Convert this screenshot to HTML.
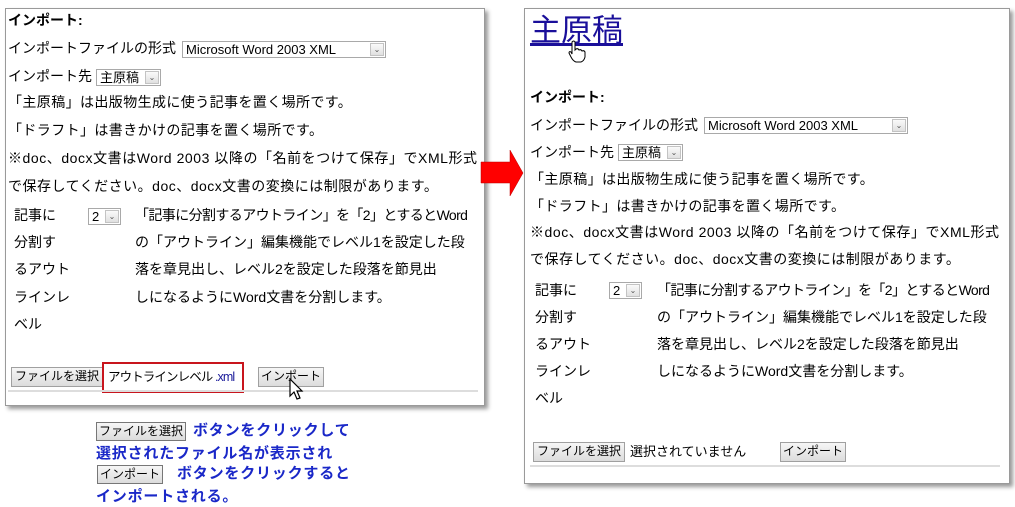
<!DOCTYPE html>
<html><head><meta charset="utf-8"><style>
body{margin:0;width:1015px;height:507px;background:#fff;position:relative;overflow:hidden;font-family:"Liberation Sans","Noto Sans CJK JP",sans-serif;color:#000}
.p{position:absolute;background:#fff;border:1px solid #9a9a9a;box-shadow:3px 3px 4px #999}
.t{position:absolute;white-space:nowrap;font-size:14px;line-height:16px}
.sel{position:absolute;border:1px solid #a9a9a9;background:#fff;font-size:13px;line-height:16px;height:17px;padding-left:3px;box-sizing:border-box;color:#000;white-space:nowrap}
.sel .a{position:absolute;right:1px;top:1px;width:14px;height:13px;border:1px solid #c3c3c3;background:linear-gradient(#fafafa,#e0e0e0);box-sizing:border-box;font-size:8px;line-height:12px;text-align:center;color:#555}
.btn{position:absolute;border:1px solid #a0a0a0;background:linear-gradient(#f6f6f6,#dcdcdc);font-size:12px;line-height:17px;height:20px;box-sizing:border-box;text-align:center;white-space:nowrap;overflow:hidden}
.hr{position:absolute;height:2px;background:#ddd}
.b{position:absolute;white-space:nowrap;font-size:15px;font-weight:bold;color:#1a28c8;line-height:16px;letter-spacing:0.8px}
</style></head><body>

<!-- left panel -->
<div class="p" style="left:5px;top:8px;width:478px;height:396px"></div>
<div class="t" style="left:8px;top:12px;font-weight:bold">インポート:</div>
<div class="t" style="left:8px;top:40px">インポートファイルの形式</div>
<div class="sel" style="left:182px;top:41px;width:204px">Microsoft Word 2003 XML<span class="a">⌄</span></div>
<div class="t" style="left:8px;top:68px">インポート先</div>
<div class="sel" style="left:96px;top:69px;width:65px">主原稿<span class="a">⌄</span></div>
<div class="t" style="left:8px;top:94px;letter-spacing:0.4px">「主原稿」は出版物生成に使う記事を置く場所です。</div>
<div class="t" style="left:8px;top:122px;letter-spacing:0.4px">「ドラフト」は書きかけの記事を置く場所です。</div>
<div class="t" style="left:8px;top:150px;letter-spacing:0.55px">※doc、docx文書はWord 2003 以降の「名前をつけて保存」でXML形式</div>
<div class="t" style="left:8px;top:178px;letter-spacing:0.5px">で保存してください。doc、docx文書の変換には制限があります。</div>
<div class="t" style="left:14px;top:207px">記事に</div>
<div class="sel" style="left:88px;top:208px;width:33px">2<span class="a">⌄</span></div>
<div class="t" style="left:135px;top:207px;letter-spacing:-0.6px">「記事に分割するアウトライン」を「2」とするとWord</div>
<div class="t" style="left:14px;top:234px">分割す</div>
<div class="t" style="left:135px;top:234px">の「アウトライン」編集機能でレベル1を設定した段</div>
<div class="t" style="left:14px;top:261px">るアウト</div>
<div class="t" style="left:135px;top:261px">落を章見出し、レベル2を設定した段落を節見出</div>
<div class="t" style="left:14px;top:289px">ラインレ</div>
<div class="t" style="left:135px;top:289px">しになるようにWord文書を分割します。</div>
<div class="t" style="left:14px;top:316px">ベル</div>
<div class="btn" style="left:11px;top:367px;width:92px">ファイルを選択</div>
<div style="position:absolute;left:102px;top:362px;width:142px;height:31px;border:2px solid #c8151d;box-sizing:border-box;background:#fff"></div>
<div class="t" style="left:108px;top:369px;font-size:12.5px;letter-spacing:-0.9px">アウトラインレベル <span style="color:#1a1a9a">.xml</span></div>
<div class="btn" style="left:258px;top:367px;width:66px">インポート</div>
<div class="hr" style="left:8px;top:390px;width:470px"></div>
<svg style="position:absolute;left:288px;top:378px" width="18" height="24" viewBox="0 0 18 24"><path d="M2 1 L2 18 L6 14 L9 21 L12 20 L9 13 L14 13 Z" fill="#fff" stroke="#000" stroke-width="1.2"/></svg>

<!-- arrow -->
<svg style="position:absolute;left:478px;top:148px" width="48" height="50" viewBox="0 0 48 50"><path d="M3 14 H32 V2 L45 25 L32 48 V35 H3 Z" fill="#f00" stroke="#b00" stroke-width="0.5"/></svg>

<!-- annotation -->
<div class="btn" style="left:96px;top:422px;width:90px;height:19px;border-color:#777">ファイルを選択</div>
<div class="b" style="left:193px;top:423px">ボタンをクリックして</div>
<div class="b" style="left:96px;top:446px">選択されたファイル名が表示され</div>
<div class="btn" style="left:97px;top:465px;width:66px;height:19px;border-color:#777">インポート</div>
<div class="b" style="left:177px;top:466px">ボタンをクリックすると</div>
<div class="b" style="left:96px;top:489px">インポートされる。</div>

<!-- right panel -->
<div class="p" style="left:524px;top:8px;width:484px;height:474px"></div>
<div style="position:absolute;left:530px;top:13px;font-size:31px;line-height:36px;color:#1a0f9a;text-decoration:underline;white-space:nowrap">主原稿</div>
<svg style="position:absolute;left:567px;top:40px" width="20" height="24" viewBox="0 0 20 24"><path d="M5 2 Q7 0 8 2 V10 L9 9 Q11 8 12 10 Q14 9 15 11 Q17 10 18 12 V17 Q17 21 14 22 H9 Q6 21 4 17 L2 13 Q2 11 4 12 L5 14 Z" fill="#fff" stroke="#000" stroke-width="1"/></svg>
<div class="t" style="left:530px;top:89px;font-weight:bold">インポート:</div>
<div class="t" style="left:530px;top:117px">インポートファイルの形式</div>
<div class="sel" style="left:704px;top:117px;width:204px">Microsoft Word 2003 XML<span class="a">⌄</span></div>
<div class="t" style="left:530px;top:144px">インポート先</div>
<div class="sel" style="left:618px;top:144px;width:65px">主原稿<span class="a">⌄</span></div>
<div class="t" style="left:530px;top:171px;letter-spacing:0.4px">「主原稿」は出版物生成に使う記事を置く場所です。</div>
<div class="t" style="left:530px;top:198px;letter-spacing:0.4px">「ドラフト」は書きかけの記事を置く場所です。</div>
<div class="t" style="left:530px;top:224px;letter-spacing:0.55px">※doc、docx文書はWord 2003 以降の「名前をつけて保存」でXML形式</div>
<div class="t" style="left:530px;top:251px;letter-spacing:0.5px">で保存してください。doc、docx文書の変換には制限があります。</div>
<div class="t" style="left:535px;top:282px">記事に</div>
<div class="sel" style="left:609px;top:282px;width:33px">2<span class="a">⌄</span></div>
<div class="t" style="left:657px;top:282px;letter-spacing:-0.6px">「記事に分割するアウトライン」を「2」とするとWord</div>
<div class="t" style="left:535px;top:309px">分割す</div>
<div class="t" style="left:657px;top:309px">の「アウトライン」編集機能でレベル1を設定した段</div>
<div class="t" style="left:535px;top:336px">るアウト</div>
<div class="t" style="left:657px;top:336px">落を章見出し、レベル2を設定した段落を節見出</div>
<div class="t" style="left:535px;top:363px">ラインレ</div>
<div class="t" style="left:657px;top:363px">しになるようにWord文書を分割します。</div>
<div class="t" style="left:535px;top:390px">ベル</div>
<div class="btn" style="left:533px;top:442px;width:92px">ファイルを選択</div>
<div class="t" style="left:630px;top:444px;font-size:13px">選択されていません</div>
<div class="btn" style="left:780px;top:442px;width:66px">インポート</div>
<div class="hr" style="left:530px;top:465px;width:470px"></div>
</body></html>
